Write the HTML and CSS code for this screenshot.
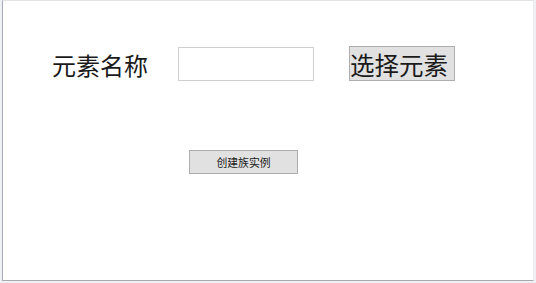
FILE: index.html
```html
<!DOCTYPE html>
<html lang="zh-CN">
<head>
<meta charset="utf-8">
<link rel="stylesheet" href="styles.css">
</head>
<body>
<div class="frame">
  <div class="row-top">
    <span class="label">元素名称</span>
    <input class="name-input" type="text">
    <button class="btn-select">选择元素</button>
  </div>
  <div class="row-bottom">
    <button class="btn-create">创建族实例</button>
  </div>
</div>
</body>
</html>
```
FILE: styles.css
```css
html, body {
  margin: 0;
  padding: 0;
}
body {
  width: 536px;
  height: 283px;
  background: #eef0f3;
  overflow: hidden;
  font-family: "Noto Sans CJK SC", "Microsoft YaHei", sans-serif;
  color: #1a1a1a;
}
.frame {
  box-sizing: border-box;
  margin-left: 2px;
  width: 532px;
  height: 281px;
  background: #ffffff;
  border-left: 1px solid #a4acba;
  border-top: 1px solid #e2e4e8;
  border-right: 1px solid #ececec;
  border-bottom: 1px solid #a9a9a9;
}
.row-top {
  display: flex;
  align-items: center;
  padding-top: 45px;
  height: 35px;
}
.label {
  width: 126px;
  margin-left: 49px;
  font-size: 24px;
  line-height: 34px;
  white-space: nowrap;
  padding-top: 2px;
}
.name-input {
  box-sizing: border-box;
  width: 136px;
  height: 34px;
  margin: 0;
  padding: 0;
  border: 1px solid #cfcfcf;
  background: #fff;
  outline: none;
}
.btn-select {
  box-sizing: border-box;
  margin: 0 0 0 35px;
  width: 106px;
  height: 35px;
  padding: 2px 0 0 0;
  background: #e1e1e1;
  border: 1px solid #adadad;
  border-radius: 0;
  font-family: inherit;
  font-size: 24.5px;
  line-height: 30px;
  color: #1a1a1a;
  text-align: left;
  white-space: nowrap;
  overflow: hidden;
}
.row-bottom {
  display: flex;
  padding-top: 69px;
}
.btn-create {
  box-sizing: border-box;
  margin: 0 0 0 186px;
  width: 109px;
  height: 24px;
  padding: 1px 0 0 0;
  background: #e1e1e1;
  border: 1px solid #adadad;
  border-radius: 0;
  font-family: inherit;
  font-size: 10.8px;
  line-height: 21px;
  color: #1a1a1a;
  text-align: center;
  white-space: nowrap;
}
```
